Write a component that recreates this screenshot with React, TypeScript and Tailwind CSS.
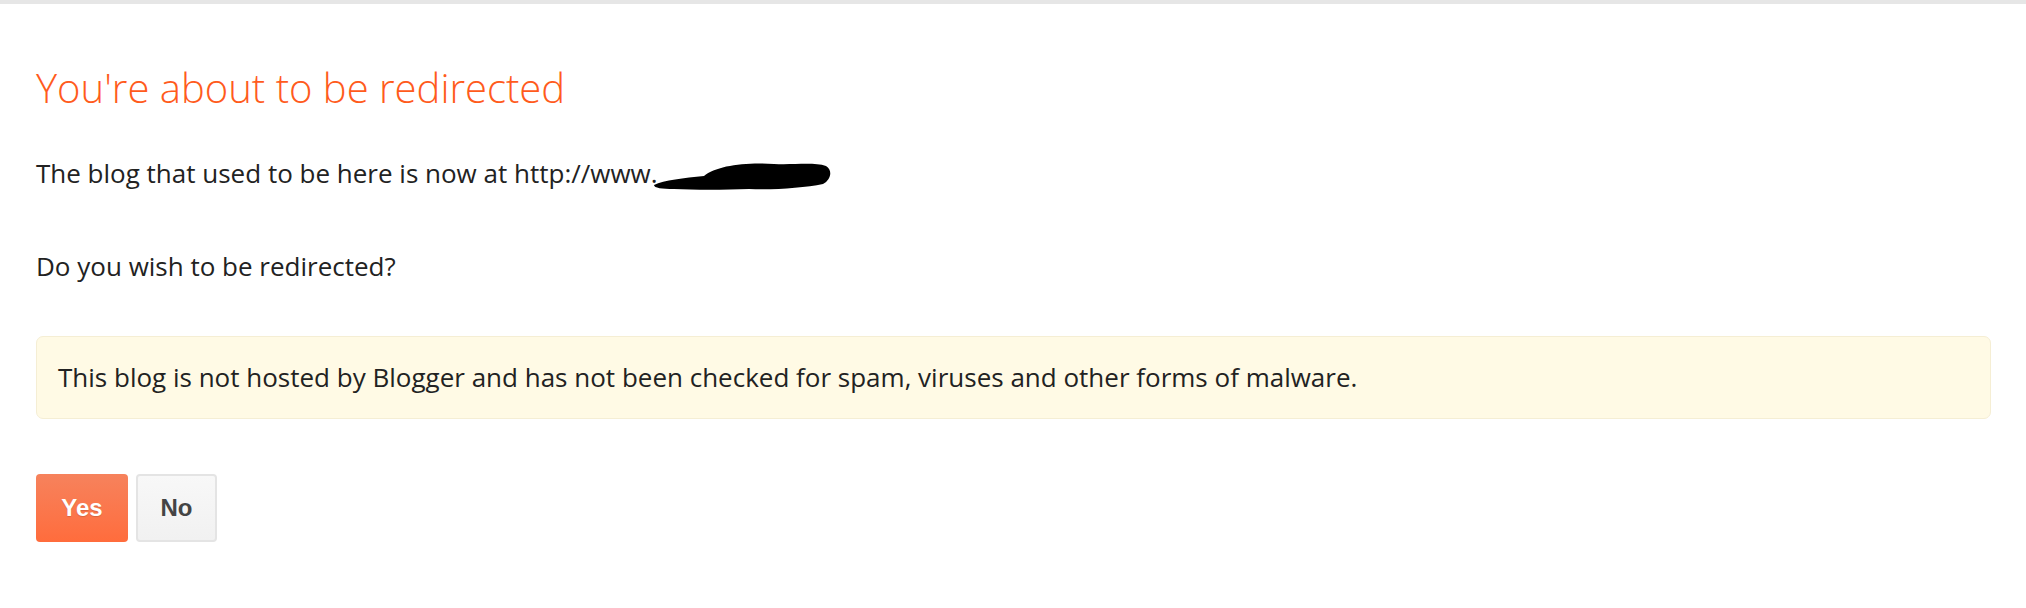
import React from "react";

const App = () => {
  return (
    <div
      className="min-h-[608px] w-full bg-white border-t-4 border-[#e6e6e6] text-[#222222]"
      style={{ fontFamily: '"Open Sans", "Noto Sans", sans-serif' }}
    >
      <div className="pl-9 pr-[35px] pt-[60px]">
        {/* Heading */}
        <h1 className="text-[40px] leading-[48px] font-light text-[#ff5b1c]">
          You're about to be redirected
        </h1>

        {/* Body */}
        <p className="mt-[43px] h-[36px] text-[26px] leading-[36px] flex items-start">
          <span>The blog that used to be here is now at http://www.</span>
          {/* redaction scribble */}
          <svg className="-ml-1 mt-[6px] shrink-0" width="178" height="30" viewBox="0 0 178 30">
            <path
              d="M0 24 C10 19 30 17 50 15 C62 5 90 1 120 3 C140 4 160 1 172 5 C179 9 177 19 169 23 C150 27 120 29 95 28 C70 29 40 29 20 28 C8 28 0 27 0 24 Z"
              fill="#000"
            />
          </svg>
        </p>
        <p className="mt-[57px] text-[26px] leading-[36px]">Do you wish to be redirected?</p>

        {/* Warning box */}
        <div className="mt-[52px] border border-[#f5eed4] bg-[#fffae5] rounded-[7px] px-[21px] py-[22px] text-[26px] leading-[37px]">
          This blog is not hosted by Blogger and has not been checked for spam, viruses and other forms of malware.
        </div>

        {/* Buttons */}
        <div
          className="mt-[55px] flex gap-2"
          style={{ fontFamily: '"Liberation Sans", Arial, sans-serif' }}
        >
          <button className="w-[92px] h-[68px] rounded-[4px] bg-gradient-to-b from-[#f6825c] to-[#ff6c3c] text-white text-[24px] font-bold [text-shadow:0_1px_1px_rgba(0,0,0,0.15)]">
            Yes
          </button>
          <button className="w-[81px] h-[68px] rounded-[4px] border-2 border-[#e4e4e4] bg-gradient-to-b from-[#f8f8f8] to-[#f1f1f1] text-[#444444] text-[24px] font-bold">
            No
          </button>
        </div>
      </div>
    </div>
  );
};

export default App;
